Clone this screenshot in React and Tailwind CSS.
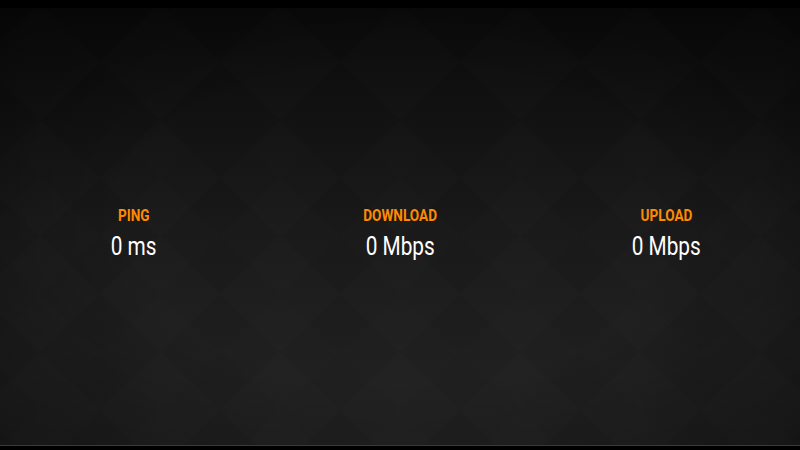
import React from "react";

const stats = [
  { label: "PING", value: "0 ms" },
  { label: "DOWNLOAD", value: "0 Mbps" },
  { label: "UPLOAD", value: "0 Mbps" },
];

function Diamonds() {
  return (
    <svg className="absolute inset-0 w-full h-full" preserveAspectRatio="none">
      <defs>
        <pattern id="dia" width="120" height="116" patternUnits="userSpaceOnUse" x="-20" y="-4">
          <path d="M60 0 L120 58 L60 116 L0 58 Z" fill="#ffffff" fillOpacity="0.006" />
          <path d="M0 0 L60 58 L0 116 Z M120 0 L60 58 L120 116 Z" fill="#000000" fillOpacity="0.025" />
        </pattern>
      </defs>
      <rect width="100%" height="100%" fill="url(#dia)" />
    </svg>
  );
}

export default function App() {
  return (
    <div className="w-[800px] h-[450px] flex flex-col bg-black overflow-hidden" style={{ fontFamily: "Roboto, 'Liberation Sans', sans-serif" }}>
      <div className="h-2 shrink-0 bg-black" />
      <main className="relative flex-1 bg-gradient-to-b from-[#0a0a0a] via-[#1a1a1a] to-[#232323]">
        <Diamonds />
        <div className="absolute inset-0 bg-[radial-gradient(ellipse_at_center,transparent_50%,rgba(0,0,0,0.4)_100%)]" />
        <div className="relative h-full grid grid-cols-3 items-center pt-[12px]">
          {stats.map((s) => (
            <div key={s.label} className="flex flex-col items-center">
              <div className="text-[17px] leading-[20px] font-bold text-[#ff8a00] scale-x-[0.8]">{s.label}</div>
              <div className="mt-[6px] text-[26px] leading-[30px] text-white scale-x-[0.8]">{s.value}</div>
            </div>
          ))}
        </div>
      </main>
      <div className="h-px shrink-0 bg-[#3a3a3a]" />
      <div className="h-1 shrink-0 bg-black" />
    </div>
  );
}
